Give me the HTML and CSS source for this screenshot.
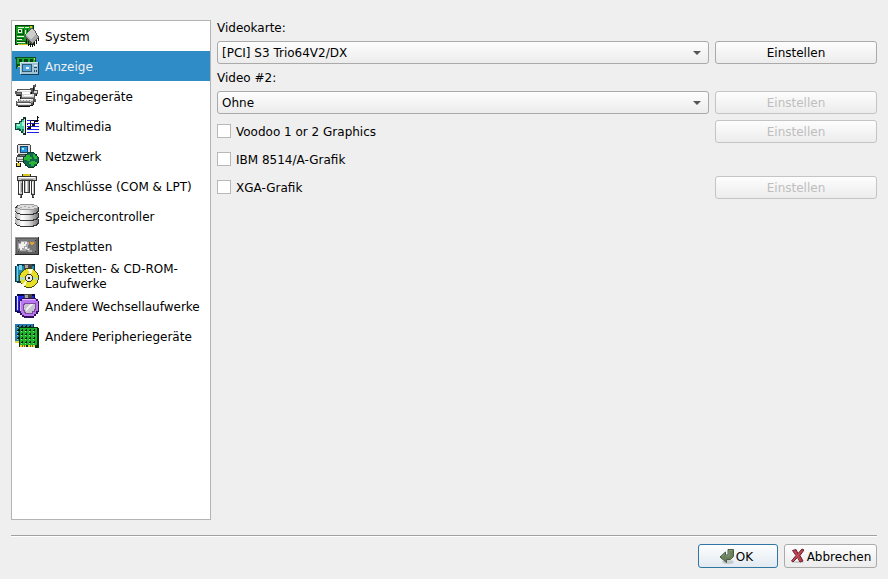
FILE: index.html
```html
<!DOCTYPE html>
<html lang="de">
<head>
    <meta charset="UTF-8">
    <meta name="viewport" content="width=device-width, initial-scale=1.0">
    <title>Einstellungen</title>
    <link rel="stylesheet" href="styles.css">
</head>
<body>
    <form class="dialog">
        <div class="main">
            <nav class="sidebar">
                <button type="button" class="item">
                    <svg class="icon" viewBox="0 0 24 24">
                        <path fill="#043a08" d="M0 1h19v20H0z"/>
                        <path fill="#159b22" d="M1 2h17v18H1z"/>
                        <path fill="#e8f5dc" d="M3 3h6v1H3zM3 5h4v4H3zM10 3h4v1h-4zM2 12h7v1H2zM2 15h5v1H2zM2 18h8v1H2zM10 6h1v4h-1z"/>
                        <path fill="#064d0b" d="M4 6h2v2H4zM8 5h1v5H8zM2 10h7v1H2zM2 14h7v1H2zM2 17h9v1H2zM12 5h1v3h-1z"/>
                        <path fill="#d3c52b" d="M15 2h2v2h-2zM3 20h10v1H3z"/>
                        <path fill="#111" d="M11 14h1v6h-1zM13 16h1v6h-1zM15 18h1v5h-1zM17 19h1v4h-1zM19 17h1v5h-1zM21 15h1v5h-1zM23 13h1v4h-1z"/>
                        <path fill="#555" d="M10 12l6-8 3 1 5 8-7 8-7-7z"/>
                        <path fill="#a8a8a8" d="M11 12l6-7 6 8-6 6z"/>
                        <path fill="#cdcdcd" d="M11 11l5-6 3 1 2 4-5 6z"/>
                    </svg>
                    <span>System</span>
                </button>
                <button type="button" class="item active">
                    <svg class="icon" viewBox="0 0 24 24">
                        <path fill="#07521a" d="M0 3h21v7H6v3H2v2H1V5H0z"/>
                        <path fill="#22a63b" d="M2 4h18v6H2z"/>
                        <path fill="#064415" d="M4 5h3v3H4zM9 5h4v3H9zM15 5h3v3h-3z"/>
                        <path fill="#e4d24c" d="M3 12h2v1H3zM19 4h1v2h-1z"/>
                        <path fill="#173c58" d="M6 8h18v13H6z"/>
                        <path fill="#9ec3d4" d="M5 8h18v12H5z"/>
                        <path fill="#d3e5eb" d="M5 8h18v1H5zM5 8h1v12H5z"/>
                        <path fill="#315a77" d="M7 10h10v8H7z"/>
                        <path fill="#54a7d8" d="M8 11h8v6H8z"/>
                        <path fill="#e8f4f8" d="M11 13h3v2h-3zM19 11h3v1h-3z"/>
                        <path fill="#284b60" d="M19 13h3v1h-3zM19 16h1v2h-1zM21 16h1v2h-1z"/>
                    </svg>
                    <span>Anzeige</span>
                </button>
                <button type="button" class="item">
                    <svg class="icon" viewBox="0 0 24 24">
                        <path fill="#555" d="M2 5h13V4h3V1h2V0h1v3h-1v3h3v4h-1v2h-2v3h1v3h-2v3h-4v2H3v-1H1v-5h2v-2h2v-3H1v-2H0V7h2z"/>
                        <path fill="#dadada" d="M3 6h13v2H2V7h1zM7 10h12v3H7zM4 15h14v3H2v-1h2zM2 19h14v2H3v-1H2zM19 7h3v2h-3z"/>
                        <path fill="#fff" d="M5 6h10v1H5zM6 15h10v1H6zM9 11h8v1H9zM3 19h11v1H3zM7 8h8v2H7z"/>
                        <path fill="#111" d="M2 11h4v1H2zM5 13h1v2H5zM3 22h12v1H3zM15 21h3v1h-3zM18 18h1v3h-1zM18 3h1v4h-1zM21 10h1v2h-1zM16 8h1v2h-1z"/>
                        <path fill="#8b8b8b" d="M2 9h4v1H2zM7 13h12v1H7zM3 17h12v1H3zM16 17h2v2h-2zM5 16h1v1H5zM8 16h1v1H8zM11 16h1v1h-1zM14 16h1v1h-1z"/>
                    </svg>
                    <span>Eingabegeräte</span>
                </button>
                <button type="button" class="item">
                    <svg class="icon" viewBox="0 0 24 24">
                        <path fill="#2020e8" d="M12 6h12v1H12zM12 9h12v1H12zM12 12h12v1H12zM12 15h12v1H12zM12 18h12v1H12z"/>
                        <path fill="#123f36" d="M0 9h4V7h2V5h2V3h3v18H8v-2H6v-2H4v-1H0z"/>
                        <path fill="#45cfa0" d="M1 10h4V8h2V6h3v13H8v-2H6v-2H1z"/>
                        <path fill="#a5f5dc" d="M2 10h3v2H2zM7 8h2v4H7z"/>
                        <path fill="#188064" d="M2 14h3v1H2zM7 15h2v2H7z"/>
                        <path fill="#e0e0e0" d="M9 5h1v14H9z"/>
                        <path fill="#111" d="M10 4h1v17h-1zM12 10h1v1h-1zM12 14h1v1h-1zM15 7h1v7h-1zM16 6h3v1h-3zM19 7h1v4h-1zM13 13h3v2h-3zM17 10h3v2h-3zM22 2h1v5h-1zM23 3h1v1h-1zM20 6h3v2h-3z"/>
                    </svg>
                    <span>Multimedia</span>
                </button>
                <button type="button" class="item">
                    <svg class="icon" viewBox="0 0 24 24">
                        <path fill="#444" d="M3 0h12v1h1v10h-2v1h2v6H1v-5h1v-2h1V9H2V1h1z"/>
                        <path fill="#e0e0e0" d="M3 1h12v9H3zM2 13h13v4H2z"/>
                        <path fill="#1c465f" d="M5 2h8v7H5z"/>
                        <path fill="#2597e8" d="M6 3h6v5H6z"/>
                        <path fill="#b4e7ff" d="M7 4h2v2H7z"/>
                        <path fill="#777" d="M5 11h8v1H5zM3 15h7v1H3z"/>
                        <path fill="#111" d="M3 17h1v2h2v4H1v-4h2z"/>
                        <path fill="#e2cd33" d="M2 19h3v3H2z"/>
                        <circle cx="16" cy="16" r="8" fill="#073d2c"/>
                        <circle cx="16" cy="16" r="7" fill="#13664e"/>
                        <path fill="#29b635" d="M11 11h4v2h2v2h-2v2h-3v-1H9v-3h2zM18 10h2v2h2v3h-3v-2h-1zM16 17h4v1h2v2h-3v2h-3v-2h-2v-2h2z"/>
                    </svg>
                    <span>Netzwerk</span>
                </button>
                <button type="button" class="item">
                    <svg class="icon" viewBox="0 0 24 24">
                        <path fill="#333" d="M7 0h9v2h6v5h-2v14h-1v3h-2v-3h-1V7h-1v12H9V7H8v14H7v3H5v-3H3V7H2V2h5z"/>
                        <path fill="#d8cc24" d="M8 0h7v2H8z"/>
                        <path fill="#c6c6c6" d="M3 3h18v3H3zM4 7h3v13H4zM10 7h4v11h-4zM17 7h2v13h-2z"/>
                        <path fill="#fff" d="M4 3h16v1H4zM4 8h1v11H4zM11 7h1v11h-1zM17 8h1v11h-1z"/>
                        <path fill="#888" d="M6 5h12v1H6zM6 9h1v9H6zM13 7h1v11h-1zM5 21h1v2H5zM18 21h1v2h-1z"/>
                    </svg>
                    <span>Anschlüsse (COM &amp; LPT)</span>
                </button>
                <button type="button" class="item">
                    <svg class="icon" viewBox="0 0 24 24">
                        <defs>
                            <linearGradient id="metal">
                                <stop offset="0" stop-color="#aaa"/>
                                <stop offset=".3" stop-color="#fff"/>
                                <stop offset=".6" stop-color="#ddd"/>
                                <stop offset="1" stop-color="#777"/>
                            </linearGradient>
                        </defs>
                        <path fill="#333" d="M1 14h22l1 2v4l-3 2-4 1H7l-4-1-3-2v-4z"/>
                        <path fill="url(#metal)" d="M0 15h23v4l-3 2-4 1H7l-4-1-3-2z"/>
                        <path fill="#333" d="M1 8h22l1 2v4l-3 2-4 1H7l-4-1-3-2v-4z"/>
                        <path fill="url(#metal)" d="M0 9h23v4l-3 2-4 1H7l-4-1-3-2z"/>
                        <path fill="#333" d="M7 0h10l4 1 3 2v5l-3 2-4 1H7l-4-1-3-2V3l3-2z"/>
                        <path fill="url(#metal)" d="M0 4h23v3l-3 2-4 1H7L3 9 0 7z"/>
                        <path fill="#999" d="M7 0h10l4 1 2 2-2 2-4 1H7L3 5 1 3l2-2z"/>
                        <path fill="#ddd" d="M7 1h10l4 1 1 1-1 1-4 1H7L3 4 2 3l1-1z"/>
                        <path fill="#aaa" d="M5 3h2v1H5zM9 2h2v1H9zM13 3h2v1h-2zM17 2h2v1h-2z"/>
                    </svg>
                    <span>Speichercontroller</span>
                </button>
                <button type="button" class="item">
                    <svg class="icon" viewBox="0 0 24 24">
                        <path fill="#292929" d="M0 3h24v18H0z"/>
                        <path fill="#929292" d="M0 3h23v17H0z"/>
                        <path fill="#5d5d5d" d="M1 4h22v16H1z"/>
                        <path fill="#777" d="M2 5h19v13H2z"/>
                        <path fill="#aaa" d="M3 9h3V7h6v1h2v3h-1v3h2v2h2v2h-4v-2h-2v1H5v-2H3z"/>
                        <path fill="#f0f0f0" d="M4 10h2V8h3v2h2v2H9v2H7v2H5v-2H4zM10 8h2v2h-2zM10 13h2v2h-2zM12 15h2v1h-2z"/>
                        <path fill="#e2a035" d="M15 8h4v2h-4zM16 10h2v1h-2z"/>
                        <path fill="#333" d="M3 6h1v1H3zM20 6h1v1h-1zM3 17h1v1H3zM20 17h1v1h-1z"/>
                    </svg>
                    <span>Festplatten</span>
                </button>
                <button type="button" class="item">
                    <svg class="icon" viewBox="0 0 24 24">
                        <path fill="#08364b" d="M2 0h18v19H2v-1H0V2h2z"/>
                        <path fill="#218ab1" d="M1 2h18v15H1z"/>
                        <path fill="#7bd0e5" d="M2 2h1v15H2zM4 1h3v5H4z"/>
                        <path fill="#444" d="M9 0h8v5H9z"/>
                        <path fill="#aaa" d="M10 1h3v3h-3z"/>
                        <circle cx="14" cy="14" r="10" fill="#46480c"/>
                        <circle cx="14" cy="14" r="9" fill="#e7df27"/>
                        <path fill="#fffcd1" d="M13 5h5l-3 8zM13 15l-3 7H8l-1-2z"/>
                        <path fill="#a8dcc0" d="M5 13l7 1-6 3zM16 13l7 1-1 3z"/>
                        <circle cx="14" cy="14" r="4" fill="#3a3a27"/>
                        <circle cx="14" cy="14" r="3" fill="#e8e8e8"/>
                        <path fill="#222" d="M13 13h2v2h-2z"/>
                    </svg>
                    <span>Disketten- &amp; CD-ROM-Laufwerke</span>
                </button>
                <button type="button" class="item">
                    <svg class="icon" viewBox="0 0 24 24">
                        <path fill="#080850" d="M2 0h18v19H2v-1H0V2h2z"/>
                        <path fill="#2424e8" d="M1 2h18v15H1z"/>
                        <path fill="#d8d8ff" d="M2 2h1v14H2z"/>
                        <path fill="#444" d="M9 0h8v5H9z"/>
                        <path fill="#aaa" d="M10 1h3v3h-3z"/>
                        <path fill="#341058" d="M7 4h14v1h2v2h1v11h-1v2h-2v2h-2v2H9v-1H7v-2H5v-3H4V7h1V5h2z"/>
                        <path fill="#b977f0" d="M7 5h14v2h2v10h-2v3h-2v2H9v-1H7v-2H6v-2H5V7h2z"/>
                        <path fill="#e2b8ff" d="M7 5h13v1H7zM5 7h1v10H5z"/>
                        <path fill="#7a4b9c" d="M9 9h12v7h-1v2h-2v2h-8v-1H9v-2H8v-7h1z"/>
                        <path fill="#c8c3cc" d="M10 10h10v5h-1v2h-2v2h-6v-1h-1v-2H9v-5h1z"/>
                        <path fill="#eee" d="M15 10h4l-8 7v-3z"/>
                    </svg>
                    <span>Andere Wechsellaufwerke</span>
                </button>
                <button type="button" class="item">
                    <svg class="icon" viewBox="0 0 24 24">
                        <defs>
                            <pattern id="holes" width="4" height="4" patternUnits="userSpaceOnUse">
                                <path fill="#041c05" d="M2 2h2v1H2zM3 1h1v1H3z"/>
                                <path fill="#8fed90" d="M2 3h1v1H2z"/>
                            </pattern>
                        </defs>
                        <path fill="#092e4e" d="M0 0h19v19H0z"/>
                        <path fill="#247bb5" d="M0 0h18v17H0z"/>
                        <path fill="url(#holes)" d="M1 0h17v17H1z"/>
                        <path fill="#e5d735" d="M0 17h4v2H0z"/>
                        <path fill="#062f08" d="M4 3h19v1h1v20h-4v-1H4z"/>
                        <path fill="#1cb52a" d="M5 4h17v17H5z"/>
                        <path fill="url(#holes)" d="M5 4h17v17H5z"/>
                        <path fill="#e5d735" d="M5 21h6v2H5zM13 21h7v2h-7z"/>
                        <path fill="#6e6516" d="M7 21h1v2H7zM9 21h1v2H9zM15 21h1v2h-1zM17 21h1v2h-1z"/>
                    </svg>
                    <span>Andere Peripheriegeräte</span>
                </button>
            </nav>
            <div class="panel">
                <label for="card1">Videokarte:</label>
                <div class="row">
                    <div class="combo">
                        <select id="card1"><option>[PCI] S3 Trio64V2/DX</option></select>
                    </div>
                    <button type="button" class="btn">Einstellen</button>
                </div>
                <label for="card2">Video #2:</label>
                <div class="row">
                    <div class="combo">
                        <select id="card2"><option>Ohne</option></select>
                    </div>
                    <button type="button" class="btn" disabled>Einstellen</button>
                </div>
                <div class="checks">
                    <div class="row check">
                        <label><input type="checkbox"><span>Voodoo 1 or 2 Graphics</span></label>
                        <button type="button" class="btn" disabled>Einstellen</button>
                    </div>
                    <div class="row check">
                        <label><input type="checkbox"><span>IBM 8514/A-Grafik</span></label>
                    </div>
                    <div class="row check">
                        <label><input type="checkbox"><span>XGA-Grafik</span></label>
                        <button type="button" class="btn" disabled>Einstellen</button>
                    </div>
                </div>
            </div>
        </div>
        <hr>
        <div class="footer">
            <button type="submit" class="btn ok">
                <svg viewBox="0 0 16 16">
                    <ellipse cx="9" cy="14" rx="6" ry="2" fill="#000" opacity=".15"/>
                    <path fill="#69805b" stroke="#4a5b42" d="M9 1.500h5.500v7l-3 3H7.500v3L1 9l5.500-5v3H9z"/>
                    <path fill="none" stroke="#8a9d7c" d="M10 2.500h3.500M3 8.500l3-2.500M6.500 8H10V3"/>
                </svg>
                OK
            </button>
            <button type="button" class="btn cancel">
                <svg viewBox="0 0 16 16">
                    <ellipse cx="8" cy="14" rx="6" ry="1" fill="#000" opacity=".15"/>
                    <path fill="#b53a49" stroke="#6b2630" d="M2.500 2.500L6 1.500 8 5.500l4-4.500 2 1-4 5.500 3 5.500-3 1-2.500-4.500L3 14l-1.500-1L6 7.500z"/>
                    <path fill="none" stroke="#c9505f" d="M4.500 3l6 10M12 2.500L3 13"/>
                </svg>
                Abbrechen
            </button>
        </div>
    </form>
</body>
</html>
```
FILE: styles.css
```css
*{
    box-sizing: border-box;
}
body{
    margin: 0;
    color: #000;
    background-color: #efefef;
    font: 12px/15px "DejaVu Sans", sans-serif;
}
button, select, input{
    margin: 0;
    color: inherit;
    font: inherit;
}
.dialog{
    display: flex;
    flex-direction: column;
    min-height: 100vh;
    padding: 20px 11px 11px;
}
.main{
    display: flex;
    flex: 1;
    gap: 6px;
}

/* Kategorien */
.sidebar{
    width: 200px;
    flex-shrink: 0;
    border: 1px solid #b4b4b4;
    background-color: #fff;
}
.item{
    display: flex;
    align-items: center;
    gap: 6px;
    width: 100%;
    height: 30px;
    padding: 0 3px;
    border: 0;
    background: none;
    text-align: left;
}
.item span, .check span{
    padding-top: 2px;
}
.item.active{
    color: #eff0f1;
    background-color: #308cc6;
}
.icon{
    width: 24px;
    height: 24px;
    flex-shrink: 0;
    shape-rendering: crispEdges;
}

/* Rechte Seite */
.panel{
    flex: 1;
}
.panel > label{
    display: block;
    padding: 1px 0 5px;
}
.panel > .row + label{
    padding-top: 7px;
}
.row{
    display: flex;
    align-items: center;
    gap: 6px;
}
.combo{
    position: relative;
    flex: 1;
}
.combo::after{
    content: "";
    position: absolute;
    top: 10px;
    right: 8px;
    border: 4px solid transparent;
    border-top-color: #555;
    border-bottom: 0;
    pointer-events: none;
}
select, .btn{
    height: 23px;
    border: 1px solid #aaa;
    border-radius: 3px;
    background: linear-gradient(#fdfdfd, #ececec);
}
select{
    display: block;
    width: 100%;
    padding: 2px 4px 0;
    appearance: none;
}
.btn{
    width: 162px;
    padding: 2px 0 0;
}
.btn:disabled{
    color: #bebebe;
    border-color: #c4c4c4;
}
.checks{
    margin-top: 3px;
}
.check{
    justify-content: space-between;
    height: 28px;
}
.check label{
    display: flex;
    align-items: center;
    gap: 5px;
}
.check input{
    width: 14px;
    height: 14px;
    border: 1px solid #b8b8b8;
    background-color: #fff;
    appearance: none;
}
.check input:checked{
    background-color: #308cc6;
}

/* Fußzeile */
hr{
    width: 100%;
    height: 2px;
    margin: 15px 0 7px;
    border: 0;
    border-top: 1px solid #a0a0a0;
    background-color: #fff;
}
.footer{
    display: flex;
    justify-content: flex-end;
    gap: 6px;
}
.footer .btn{
    display: flex;
    align-items: center;
    justify-content: center;
    gap: 1px;
    height: 24px;
}
.footer svg{
    width: 16px;
    height: 16px;
    margin-bottom: 2px;
}
.footer .ok{
    width: 80px;
    padding-right: 4px;
    border-color: #2f76a3;
    background: linear-gradient(#fdfeff, #e2eaf0);
}
.footer .cancel{
    width: 93px;
}
```
